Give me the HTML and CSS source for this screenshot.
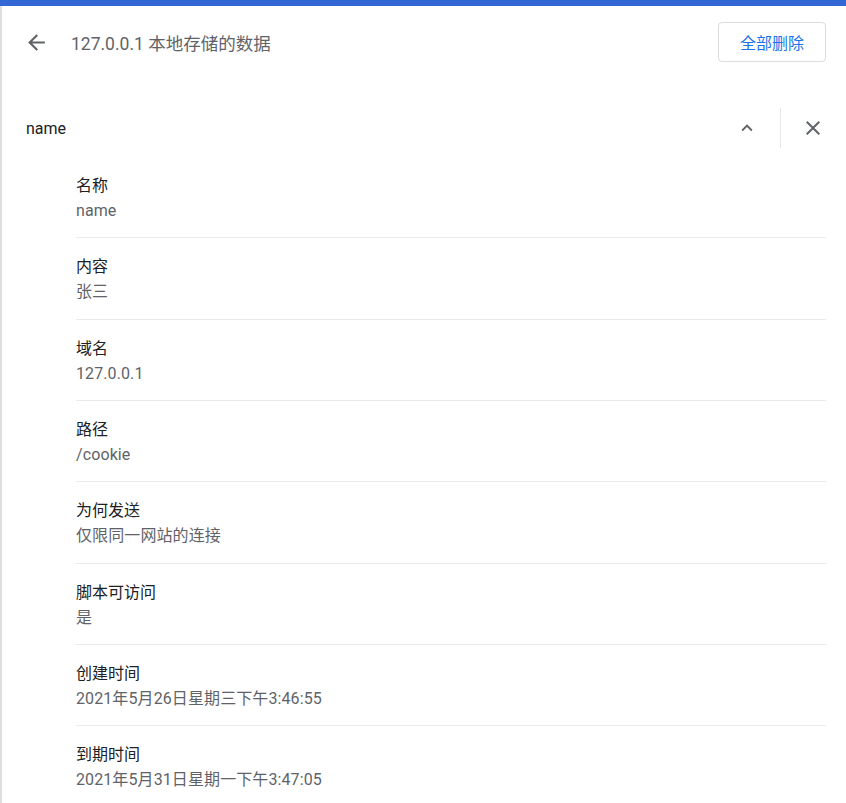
FILE: index.html
```html
<!DOCTYPE html>
<html lang="zh-CN">
<head>
<meta charset="utf-8">
<title>127.0.0.1 本地存储的数据</title>
<link rel="stylesheet" href="styles.css">
</head>
<body>
<div class="topbar"></div>
<div class="page">
  <header class="header">
    <button class="icon-btn back" aria-label="返回">
      <svg viewBox="0 0 24 24" width="25" height="25"><path d="M20 11H7.83l5.59-5.59L12 4l-8 8 8 8 1.41-1.41L7.83 13H20v-2z"/></svg>
    </button>
    <h1 class="title">127.0.0.1 本地存储的数据</h1>
    <button class="remove-all">全部删除</button>
  </header>

  <div class="item-head">
    <span class="item-name">name</span>
    <button class="icon-btn" aria-label="收起">
      <svg viewBox="0 0 24 24" width="22" height="22"><path d="M12 8l-6 6 1.41 1.41L12 10.83l4.59 4.58L18 14z"/></svg>
    </button>
    <span class="vsep"></span>
    <button class="icon-btn" aria-label="删除">
      <svg viewBox="0 0 24 24" width="24" height="24"><path d="M19 6.41L17.59 5 12 10.59 6.41 5 5 6.41 10.59 12 5 17.59 6.41 19 12 13.41 17.59 19 19 17.59 13.41 12z"/></svg>
    </button>
  </div>

  <div class="details">
    <div class="row"><div class="label">名称</div><div class="value">name</div></div>
    <div class="row"><div class="label">内容</div><div class="value">张三</div></div>
    <div class="row"><div class="label">域名</div><div class="value">127.0.0.1</div></div>
    <div class="row"><div class="label">路径</div><div class="value">/cookie</div></div>
    <div class="row"><div class="label">为何发送</div><div class="value">仅限同一网站的连接</div></div>
    <div class="row"><div class="label">脚本可访问</div><div class="value">是</div></div>
    <div class="row"><div class="label">创建时间</div><div class="value">2021年5月26日星期三下午3:46:55</div></div>
    <div class="row"><div class="label">到期时间</div><div class="value">2021年5月31日星期一下午3:47:05</div></div>
  </div>
</div>
</body>
</html>
```

FILE: styles.css
```css
html, body {
  margin: 0;
  padding: 0;
  background: #ffffff;
  font-family: Roboto, "Noto Sans CJK SC", sans-serif;
  color: #202124;
  overflow: hidden;
}

.topbar {
  height: 6px;
  background: #3367d6;
}

.page {
  border-left: 2px solid #dedede;
  min-height: 797px;
  box-sizing: border-box;
}

.icon-btn {
  width: 40px;
  height: 40px;
  flex: none;
  border: 0;
  padding: 0;
  background: transparent;
  display: flex;
  align-items: center;
  justify-content: center;
}

.icon-btn svg {
  fill: #5f6368;
}

.header {
  height: 72px;
  display: flex;
  align-items: center;
  padding: 0 20px 0 14px;
}

.title {
  margin: 0 0 0 15px;
  flex: 1;
  font-size: 17.5px;
  font-weight: 400;
  color: #5f6368;
}

.remove-all {
  width: 108px;
  height: 40px;
  border: 1px solid #dadce0;
  border-radius: 4px;
  background: #ffffff;
  color: #1a73e8;
  font-family: Roboto, "Noto Sans CJK SC", sans-serif;
  font-size: 16px;
  padding: 0;
}

.item-head {
  margin-top: 22px;
  height: 56px;
  display: flex;
  align-items: center;
  padding: 0 13px 0 24px;
}

.item-name {
  flex: 1;
  font-size: 16px;
  color: #202124;
}

.vsep {
  width: 1px;
  height: 40px;
  background: #e8e8e8;
  margin: 0 12px 0 13px;
}

.details {
  margin: 0 20px 0 74px;
}

.row {
  padding: 16px 0 14.33px;
  border-top: 1px solid #e8eaed;
}

.row:first-child {
  border-top: 0;
  padding-top: 17px;
}

.label {
  font-size: 16px;
  line-height: 25px;
  color: #202124;
}

.value {
  font-size: 16px;
  line-height: 25px;
  color: #5f6368;
  letter-spacing: 0.1px;
}
```
